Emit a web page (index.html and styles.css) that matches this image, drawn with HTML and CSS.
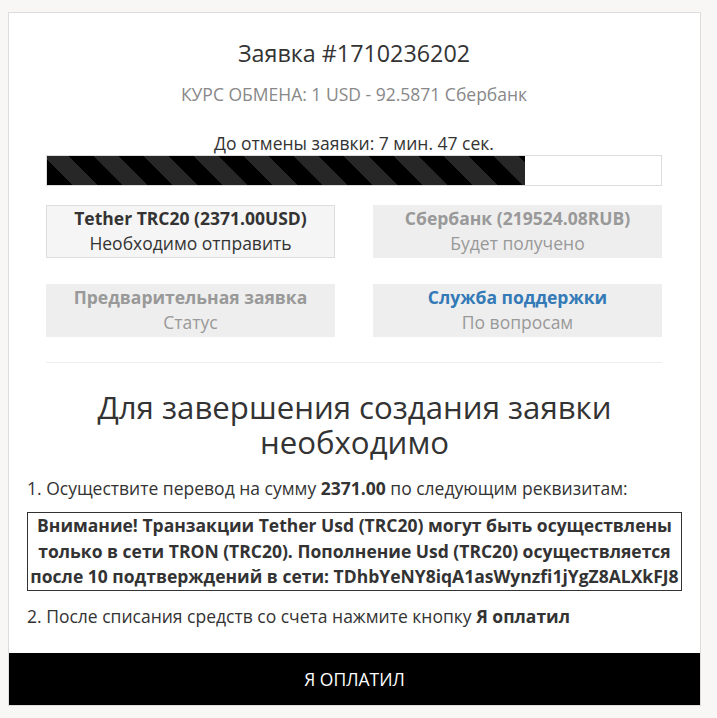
FILE: index.html
```html
<!DOCTYPE html>
<html lang="ru">
<head>
<meta charset="utf-8">
<title>Заявка #1710236202</title>
<link rel="stylesheet" href="styles.css">
</head>
<body>
<div class="card">
  <div class="top">
    <h1 class="title">Заявка #1710236202</h1>
    <div class="rate">КУРС ОБМЕНА: 1 USD - 92.5871 Сбербанк</div>
    <div class="countdown">До отмены заявки: 7 мин. 47 сек.</div>
    <div class="bar"><div class="bar-fill" style="width:77.9%"></div></div>
    <div class="grid">
      <div class="box box-active">
        <div class="box-head">Tether TRC20 (2371.00USD)</div>
        <div class="box-sub">Необходимо отправить</div>
      </div>
      <div class="box">
        <div class="box-head muted">Сбербанк (219524.08RUB)</div>
        <div class="box-sub muted">Будет получено</div>
      </div>
      <div class="box">
        <div class="box-head muted">Предварительная заявка</div>
        <div class="box-sub muted">Статус</div>
      </div>
      <div class="box">
        <div class="box-head link">Служба поддержки</div>
        <div class="box-sub muted">По вопросам</div>
      </div>
    </div>
    <hr class="sep">
  </div>
  <div class="bottom">
    <h2 class="heading">Для завершения создания заявки необходимо</h2>
    <p class="step">1. Осуществите перевод на сумму <b>2371.00</b> по следующим реквизитам:</p>
    <div class="notice">Внимание! Транзакции Tether Usd (TRC20) могут быть осуществлены только в сети TRON (TRC20). Пополнение Usd (TRC20) осуществляется после 10 подтверждений в сети: TDhbYeNY8iqA1asWynzfi1jYgZ8ALXkFJ8</div>
    <p class="step step2">2. После списания средств со счета нажмите кнопку <b>Я оплатил</b></p>
  </div>
  <button class="pay" type="button">Я ОПЛАТИЛ</button>
</div>
</body>
</html>
```

FILE: styles.css
```css
* { box-sizing: border-box; }
html, body { margin: 0; padding: 0; }
body {
  background: #f8f7f5;
  font-family: "Open Sans", "Noto Sans", sans-serif;
  color: #333;
  font-size: 17.5px;
}
.card {
  width: 693px;
  margin: 12px 0 12px 8px;
  background: #fff;
  border: 1px solid #ddd;
}
.top {
  padding: 0 38px 0 37px;
}
.title {
  margin: 25px 0 0;
  font-size: 23.3px;
  line-height: 30px;
  font-weight: 400;
  text-align: center;
  color: #333;
}
.rate {
  margin-top: 15px;
  line-height: 22px;
  text-align: center;
  color: #888;
}
.countdown {
  margin-top: 27px;
  line-height: 22px;
  text-align: center;
  color: #333;
}
.bar {
  margin-top: 1px;
  height: 31px;
  border: 1px solid #ddd;
  background: #fff;
}
.bar-fill {
  height: 100%;
  background: repeating-linear-gradient(45deg, #000 0 17.7px, #272727 17.7px 35.4px);
}
.grid {
  margin-top: 19px;
  display: grid;
  grid-template-columns: 1fr 1fr;
  column-gap: 38px;
  row-gap: 26px;
}
.box {
  height: 53px;
  background: #eee;
  text-align: center;
  padding-top: 1px;
}
.box-active {
  background: #f5f5f5;
  border: 1px solid #ddd;
  padding-top: 0;
}
.box-head {
  font-weight: 700;
  line-height: 25px;
  color: #333;
}
.box-sub {
  line-height: 25px;
  color: #333;
}
.muted { color: #999; }
.link { color: #337ab7; }
.sep {
  margin: 25px 0 0;
  border: 0;
  border-top: 1px solid #eee;
}
.bottom {
  padding: 0 18px;
}
.heading {
  margin: 27px 0 0;
  font-size: 31.2px;
  line-height: 35px;
  font-weight: 400;
  text-align: center;
  color: #333;
}
.step {
  margin: 17px 0 0;
  line-height: 22px;
}
.step b { font-weight: 700; }
.notice {
  margin-top: 13px;
  border: 1px solid #333;
  font-weight: 700;
  text-align: center;
  line-height: 25.5px;
}
.step2 { margin-top: 14px; }
.pay {
  display: block;
  width: 100%;
  margin-top: 26px;
  height: 52px;
  border: 0;
  background: #000;
  color: #fff;
  font-family: "Open Sans", "Noto Sans", sans-serif;
  font-size: 17.5px;
  cursor: pointer;
}
```
